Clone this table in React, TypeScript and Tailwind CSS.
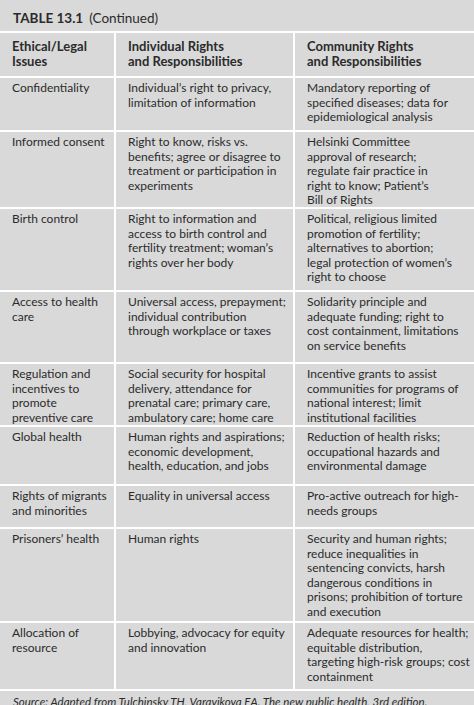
const rows: { h: string; c: string[][] }[] = [
  {
    h: "h-[52px]",
    c: [
      ["Confidentiality"],
      ["Individual’s right to privacy,", "limitation of information"],
      ["Mandatory reporting of", "specified diseases; data for", "epidemiological analysis"],
    ],
  },
  {
    h: "h-[75px]",
    c: [
      ["Informed consent"],
      ["Right to know, risks vs.", "benefits; agree or disagree to", "treatment or participation in", "experiments"],
      ["Helsinki Committee", "approval of research;", "regulate fair practice in", "right to know; Patient’s", "Bill of Rights"],
    ],
  },
  {
    h: "h-[81px]",
    c: [
      ["Birth control"],
      ["Right to information and", "access to birth control and", "fertility treatment; woman’s", "rights over her body"],
      ["Political, religious limited", "promotion of fertility;", "alternatives to abortion;", "legal protection of women’s", "right to choose"],
    ],
  },
  {
    h: "h-[70px]",
    c: [
      ["Access to health", "care"],
      ["Universal access, prepayment;", "individual contribution", "through workplace or taxes"],
      ["Solidarity principle and", "adequate funding; right to", "cost containment, limitations", "on service benefits"],
    ],
  },
  {
    h: "h-[61px]",
    c: [
      ["Regulation and", "incentives to", "promote", "preventive care"],
      ["Social security for hospital", "delivery, attendance for", "prenatal care; primary care,", "ambulatory care; home care"],
      ["Incentive grants to assist", "communities for programs of", "national interest; limit", "institutional facilities"],
    ],
  },
  {
    h: "h-[57px]",
    c: [
      ["Global health"],
      ["Human rights and aspirations;", "economic development,", "health, education, and jobs"],
      ["Reduction of health risks;", "occupational hazards and", "environmental damage"],
    ],
  },
  {
    h: "h-[41px]",
    c: [
      ["Rights of migrants", "and minorities"],
      ["Equality in universal access"],
      ["Pro-active outreach for high-", "needs groups"],
    ],
  },
  {
    h: "h-[92px]",
    c: [
      ["Prisoners’ health"],
      ["Human rights"],
      ["Security and human rights;", "reduce inequalities in", "sentencing convicts, harsh", "dangerous conditions in", "prisons; prohibition of torture", "and execution"],
    ],
  },
  {
    h: "h-[66px]",
    c: [
      ["Allocation of", "resource"],
      ["Lobbying, advocacy for equity", "and innovation"],
      ["Adequate resources for health;", "equitable distribution,", "targeting high-risk groups; cost", "containment"],
    ],
  },
];

function Cell({ lines, head }: { lines: string[]; head?: boolean }) {
  return (
    <div
      className={`overflow-hidden bg-[#d9d9d9] pl-[12px] ${
        head ? "pt-[6px] text-[13px] leading-[15px] font-bold" : "pt-[3px] text-[12px] leading-[14.5px]"
      }`}
    >
      {lines.map((l, i) => (
        <div key={i} className="whitespace-nowrap">
          {l}
        </div>
      ))}
    </div>
  );
}

export default function App() {
  return (
    <div
      className="w-[474px] h-[705px] overflow-hidden bg-white text-[#2b2b2b]"
      style={{ fontFamily: "Lato, 'Open Sans', sans-serif" }}
    >
      <div className="h-[31px] bg-[#d9d9d9] pl-[13px] pt-[10px] text-[13.5px] leading-[16px]">
        <span className="font-bold">TABLE 13.1</span>
        <span className="ml-[6px]">(Continued)</span>
      </div>
      <div className="mt-[2px] flex flex-col gap-[2px]">
        <div className="grid h-[43px] grid-cols-[114px_177px_1fr] gap-x-[2px]">
          <Cell head lines={["Ethical/Legal", "Issues"]} />
          <Cell head lines={["Individual Rights", "and Responsibilities"]} />
          <Cell head lines={["Community Rights", "and Responsibilities"]} />
        </div>
        {rows.map((r, i) => (
          <div key={i} className={`grid grid-cols-[114px_177px_1fr] gap-x-[2px] ${r.h}`}>
            {r.c.map((lines, j) => (
              <Cell key={j} lines={lines} />
            ))}
          </div>
        ))}
        <div className="h-[14px] bg-[#d9d9d9] pl-[13px] pt-[4px] text-[11.5px] leading-[14px] italic whitespace-nowrap">
          Source: Adapted from Tulchinsky TH, Varavikova EA. The new public health, 3rd edition.
        </div>
      </div>
    </div>
  );
}
